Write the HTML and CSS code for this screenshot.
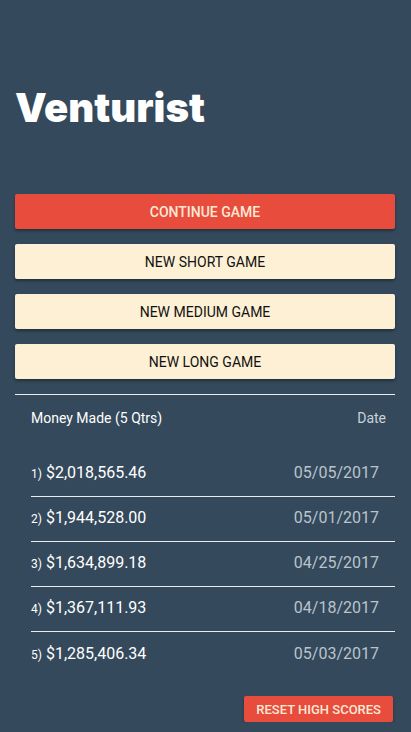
FILE: index.html
```html
<!DOCTYPE html>
<html lang="en">
<head>
  <meta charset="UTF-8" />
  <meta name="viewport" content="width=device-width, initial-scale=1" />
  <title>Venturist</title>
  <link rel="stylesheet" href="styles.css">
</head>
<body>
  <div class="app">
    <h1 class="title">Venturist</h1>

    <div class="menu">
      <button class="btn btn-red">CONTINUE GAME</button>
      <button class="btn btn-cream">NEW SHORT GAME</button>
      <button class="btn btn-cream">NEW MEDIUM GAME</button>
      <button class="btn btn-cream">NEW LONG GAME</button>
    </div>

    <div class="scores">
      <div class="scores-head">
        <span>Money Made (5 Qtrs)</span>
        <span class="head-date">Date</span>
      </div>
      <div class="score-row"><span class="money"><small>1)</small> $2,018,565.46</span><span class="date">05/05/2017</span></div>
      <div class="score-row"><span class="money"><small>2)</small> $1,944,528.00</span><span class="date">05/01/2017</span></div>
      <div class="score-row"><span class="money"><small>3)</small> $1,634,899.18</span><span class="date">04/25/2017</span></div>
      <div class="score-row"><span class="money"><small>4)</small> $1,367,111.93</span><span class="date">04/18/2017</span></div>
      <div class="score-row"><span class="money"><small>5)</small> $1,285,406.34</span><span class="date">05/03/2017</span></div>
    </div>

    <div class="footer">
      <button class="btn btn-red btn-small">RESET HIGH SCORES</button>
    </div>
  </div>
</body>
</html>
```

FILE: styles.css
```css
html, body {
  margin: 0;
  background-color: #34495b;
}
body {
  font-family: Roboto, 'Liberation Sans', sans-serif;
  color: #fff;
}
.app {
  padding: 0 16px 0 15px;
}
.title {
  margin: 0;
  padding-top: 82px;
  font-family: Inter, 'Noto Sans', sans-serif;
  font-weight: 900;
  font-size: 40px;
  line-height: 52px;
  color: #fff;
}
.menu {
  display: flex;
  flex-direction: column;
  gap: 15px;
  margin-top: 60px;
}
.btn {
  display: block;
  width: 100%;
  height: 35px;
  border: none;
  border-radius: 2px;
  font-family: Roboto, 'Liberation Sans', sans-serif;
  font-size: 14px;
  box-shadow: 0 2px 3px rgba(0,0,0,0.35);
  cursor: pointer;
}
.btn-red {
  background-color: #e74c3c;
  color: #fbe9d6;
  font-weight: 500;
}
.btn-cream {
  background-color: #fdf0d5;
  color: #111;
}
.scores {
  margin-top: 15px;
  border-top: 1px solid #e6ecef;
}
.scores-head {
  display: flex;
  justify-content: space-between;
  align-items: center;
  height: 45px;
  padding: 0 9px 0 16px;
  margin-bottom: 12px;
  font-size: 14px;
}
.head-date {
  color: #c9d3da;
}
.score-row {
  display: flex;
  justify-content: space-between;
  align-items: center;
  box-sizing: border-box;
  height: 45px;
  margin-left: 16px;
  padding-right: 16px;
  padding-bottom: 3px;
  border-bottom: 1px solid #e6ecef;
  font-size: 16px;
}
.score-row:last-child {
  border-bottom: none;
}
.money small {
  font-size: 12px;
}
.date {
  color: #b9c4cc;
}
.footer {
  display: flex;
  justify-content: flex-end;
  margin-top: 19px;
  padding-right: 2px;
}
.btn-small {
  width: auto;
  height: 26px;
  padding: 0 12px;
  font-size: 13px;
}
```
